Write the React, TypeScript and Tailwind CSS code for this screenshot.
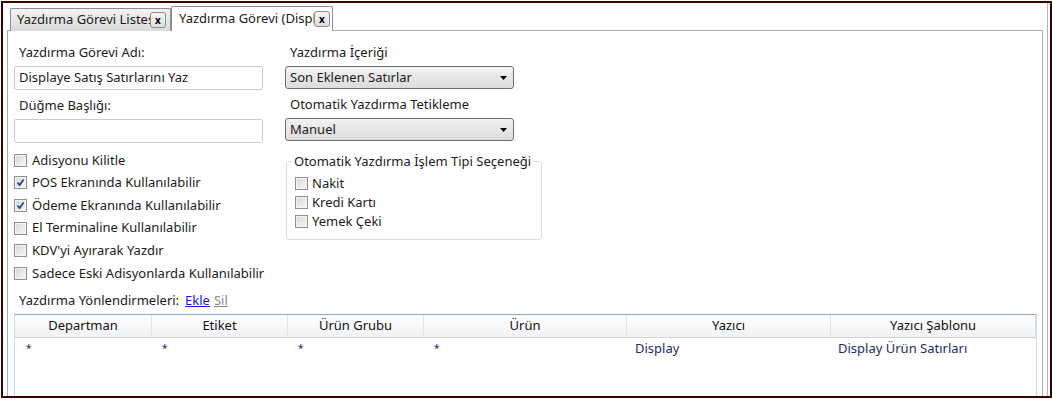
import React from 'react';

function Box({ checked = false }: { checked?: boolean }) {
  return (
    <span className="relative w-[13px] h-[13px] shrink-0 border border-[#8e8f8f] bg-gradient-to-br from-[#d8d8d8] to-[#f7f7f7] shadow-[inset_0_0_0_1px_#f4f4f4]">
      {checked && (
        <svg className="absolute left-[1px] top-[1px] w-[9px] h-[9px]" viewBox="0 0 9 9">
          <path d="M1.5 4.5 L3.6 7 L7.6 1.5" fill="none" stroke="#2b3f8f" strokeWidth="1.7" />
        </svg>
      )}
    </span>
  );
}

function Check({ label, checked }: { label: string; checked?: boolean }) {
  return (
    <div className="h-[22.6px] flex items-center gap-[5px]">
      <Box checked={checked} />
      <span>{label}</span>
    </div>
  );
}

function SmallCheck({ label }: { label: string }) {
  return (
    <div className="h-[19px] flex items-center gap-[4px]">
      <Box />
      <span>{label}</span>
    </div>
  );
}

function Select({ value }: { value: string }) {
  return (
    <div className="h-[23px] w-[229px] flex items-center justify-between pl-[4px] pr-[6px] border border-[#707070] rounded-[3px] bg-gradient-to-b from-[#f2f2f2] to-[#dcdcdc]">
      <span>{value}</span>
      <svg className="w-[7px] h-[4px]" viewBox="0 0 7 4">
        <path d="M0 0 H7 L3.5 4 Z" fill="#000" />
      </svg>
    </div>
  );
}

function TabClose() {
  return (
    <span className="w-[16px] h-[16px] shrink-0 flex items-center justify-center border border-[#8c8c8c] rounded-[3px] bg-gradient-to-b from-[#f6f6f6] to-[#dedede] text-[10px] font-bold leading-none text-black">
      x
    </span>
  );
}

const columns = [
  { title: 'Departman', w: 'w-[137px]', cell: '*', pl: 'pl-[11px]' },
  { title: 'Etiket', w: 'w-[136px]', cell: '*', pl: 'pl-[10px]' },
  { title: 'Ürün Grubu', w: 'w-[136px]', cell: '*', pl: 'pl-[10px]' },
  { title: 'Ürün', w: 'w-[203px]', cell: '*', pl: 'pl-[10px]' },
  { title: 'Yazıcı', w: 'w-[204px]', cell: 'Display', pl: 'pl-[8px]' },
  { title: 'Yazıcı Şablonu', w: 'w-[205px]', cell: 'Display Ürün Satırları', pl: 'pl-[7px]' },
];

export default function App() {
  return (
    <div className="w-[1052px] h-[400px] bg-white pt-[1px] pl-[1px] font-['Noto_Sans',sans-serif] text-[13px] text-[#1b1b1b] overflow-hidden">
      <div className="w-[1051px] h-[397px] border-2 border-[#3d0000] flex overflow-hidden">
        <div className="flex-1 flex flex-col pl-[4px] pr-[4px] border-r border-[#b4b4b4] mr-[2px] overflow-hidden">
          {/* tabs */}
          <div className="h-[27px] shrink-0 flex items-end pl-[3px]">
            <div className="w-[161px] h-[23px] flex items-center pl-[6px] pr-[4px] border border-b-0 border-[#8c8e94] rounded-t-[2px] bg-gradient-to-b from-[#f3f3f3] to-[#dadada] -mb-[1px] relative">
              <span className="flex-1 overflow-hidden whitespace-nowrap">Yazdırma Görevi Listesi</span>
              <TabClose />
            </div>
            <div className="w-[162px] h-[25px] flex items-center pl-[7px] pr-[2px] border border-b-0 border-[#8c8e94] rounded-t-[2px] bg-white -mb-[1px] relative z-10">
              <span className="flex-1 overflow-hidden whitespace-nowrap">Yazdırma Görevi (Display)</span>
              <TabClose />
            </div>
          </div>

          {/* panel */}
          <div className="flex-1 border border-[#acacac] border-b-0 bg-white pt-[9px] pl-[6px] pr-[5px] flex flex-col">
            <div className="flex gap-[22px]">
              <div className="w-[249px] flex flex-col">
                <div className="h-[26px] flex items-center pl-[5px]">Yazdırma Görevi Adı:</div>
                <div className="h-[24px] flex items-center pl-[4px] border border-[#c8ccd2] rounded-[2px]">
                  Displaye Satış Satırlarını Yaz
                </div>
                <div className="h-[26px] mt-[3px] flex items-center pl-[5px]">Düğme Başlığı:</div>
                <div className="h-[24px] border border-[#c8ccd2] rounded-[2px]" />
                <div className="mt-[6px] flex flex-col whitespace-nowrap">
                  <Check label="Adisyonu Kilitle" />
                  <Check label="POS Ekranında Kullanılabilir" checked />
                  <Check label="Ödeme Ekranında Kullanılabilir" checked />
                  <Check label="El Terminaline Kullanılabilir" />
                  <Check label="KDV'yi Ayırarak Yazdır" />
                  <Check label="Sadece Eski Adisyonlarda Kullanılabilir" />
                </div>
              </div>
              <div className="flex flex-col">
                <div className="h-[26px] flex items-center pl-[5px]">Yazdırma İçeriği</div>
                <Select value="Son Eklenen Satırlar" />
                <div className="h-[26px] mt-[3px] flex items-center pl-[5px]">Otomatik Yazdırma Tetikleme</div>
                <Select value="Manuel" />
                <fieldset className="mt-[12px] ml-[1px] w-[256px] h-[87px] border border-[#d5dfe5] rounded-[3px] pl-[8px]">
                  <legend className="ml-[-3px] px-[2px] leading-[16px]">Otomatik Yazdırma İşlem Tipi Seçeneği</legend>
                  <div className="flex flex-col mt-[5px]">
                    <SmallCheck label="Nakit" />
                    <SmallCheck label="Kredi Kartı" />
                    <SmallCheck label="Yemek Çeki" />
                  </div>
                </fieldset>
              </div>
            </div>

            <div className="h-[26px] mt-[3px] flex items-center pl-[5px] gap-[6px]">
              <span>Yazdırma Yönlendirmeleri:</span>
              <span className="flex gap-[4px]">
                <span className="text-[#1515e6] underline">Ekle</span>
                <span className="text-[#8a8a8a] underline">Sil</span>
              </span>
            </div>

            {/* grid */}
            <div className="flex-1 w-[1023px] border-t border-l border-r border-[#84add6] border-l-[#c3dcef] border-r-[#c3dcef] flex flex-col">
              <div className="h-[23px] flex border-b border-[#d5d5d5] bg-gradient-to-b from-white to-[#f1f2f4]">
                {columns.map((c) => (
                  <div key={c.title} className={`${c.w} h-full flex items-center justify-center border-r border-[#e2e3e5] text-[#111]`}>
                    {c.title}
                  </div>
                ))}
              </div>
              <div className="h-[22px] flex text-[#1c2c6a]">
                {columns.map((c) => (
                  <div key={c.title} className={`${c.w} h-full flex items-center ${c.pl}`}>
                    {c.cell === '*' ? <span className="text-[10px]">*</span> : c.cell}
                  </div>
                ))}
              </div>
            </div>
          </div>
        </div>
      </div>
    </div>
  );
}
